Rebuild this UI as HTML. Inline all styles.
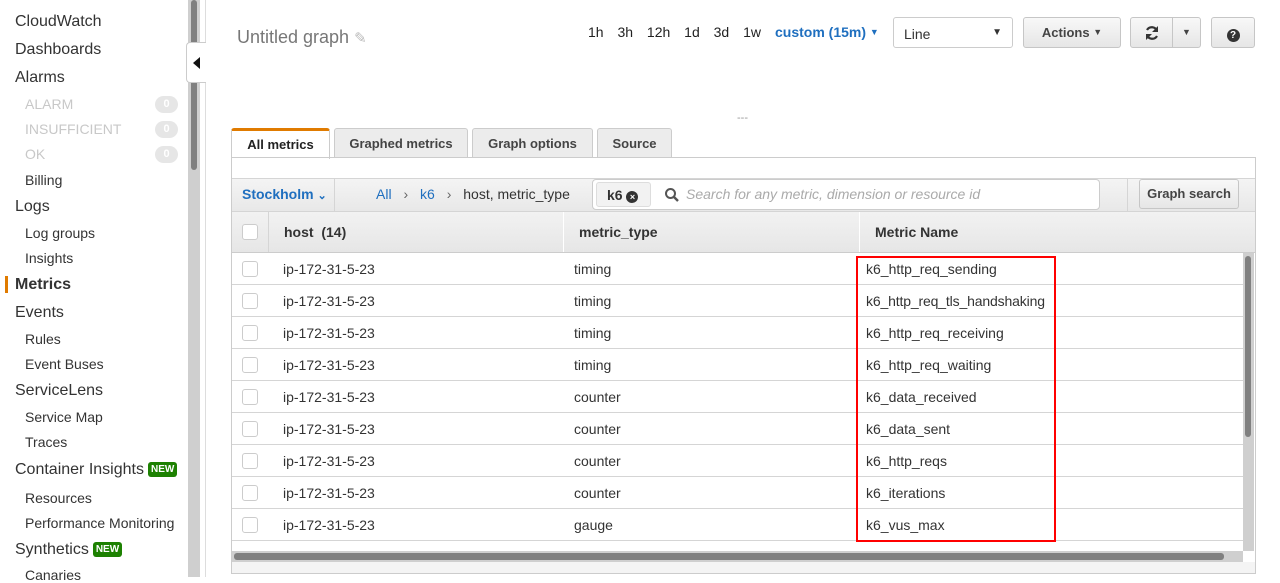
<!DOCTYPE html>
<html><head><style>
*{box-sizing:border-box;margin:0;padding:0}
body{width:1280px;height:577px;overflow:hidden;background:#fff;font-family:"Liberation Sans",Arial,sans-serif;color:#333;position:relative}
.a{position:absolute;white-space:nowrap}
.t{font-size:16px;color:#333;left:15px}
.s{font-size:14px;color:#333;left:25px}
.g{color:#c8c8c8}
.badge{position:absolute;left:155px;width:23px;height:17px;border-radius:9px;background:#e6e6e6;color:#fff;font-size:11px;font-weight:bold;text-align:center;line-height:17px}
.new{display:inline-block;background:#1d8102;color:#fff;font-size:10px;font-weight:bold;border-radius:3px;padding:2px 3px;vertical-align:2px;margin-left:4px}
.btn{position:absolute;top:17px;height:31px;border:1px solid #c6c6c6;border-radius:3px;background:linear-gradient(#f8f8f8,#e6e6e6);font-size:13px;font-weight:bold;color:#444;text-align:center;line-height:29px}
.tab{position:absolute;top:128px;height:30px;border:1px solid #ccc;border-bottom:none;background:#ececec;font-size:13px;font-weight:bold;color:#444;text-align:center;line-height:29px;border-radius:3px 3px 0 0}
.row{position:absolute;left:232px;width:1011px;height:32px;border-bottom:1px solid #d5d5d5;font-size:14px;color:#333}
.row span{position:absolute;top:8px}
.cb{position:absolute;left:10px;top:8px;width:16px;height:16px;border:1px solid #ccc;border-radius:3px;background:#fff}
</style></head><body>
<div class="a t" style="top:13px">CloudWatch</div>
<div class="a t" style="top:41px">Dashboards</div>
<div class="a t" style="top:69px">Alarms</div>
<div class="a s g" style="top:96px">ALARM</div><div class="badge" style="top:96px">0</div>
<div class="a s g" style="top:121px">INSUFFICIENT</div><div class="badge" style="top:121px">0</div>
<div class="a s g" style="top:146px">OK</div><div class="badge" style="top:146px">0</div>
<div class="a s" style="top:172px">Billing</div>
<div class="a t" style="top:198px">Logs</div>
<div class="a s" style="top:225px">Log groups</div>
<div class="a s" style="top:250px">Insights</div>
<div class="a" style="left:5px;top:276px;width:3px;height:17px;background:#e07b00"></div>
<div class="a t" style="top:276px;font-weight:bold">Metrics</div>
<div class="a t" style="top:304px">Events</div>
<div class="a s" style="top:331px">Rules</div>
<div class="a s" style="top:356px">Event Buses</div>
<div class="a t" style="top:382px">ServiceLens</div>
<div class="a s" style="top:409px">Service Map</div>
<div class="a s" style="top:434px">Traces</div>
<div class="a t" style="top:461px">Container Insights<span class="new">NEW</span></div>
<div class="a s" style="top:490px">Resources</div>
<div class="a s" style="top:515px">Performance Monitoring</div>
<div class="a t" style="top:541px">Synthetics<span class="new">NEW</span></div>
<div class="a s" style="top:567px">Canaries</div>
<div class="a" style="left:188px;top:0;width:12px;height:577px;background:#cfcfcf"></div>
<div class="a" style="left:191px;top:0;width:6px;height:170px;background:#808080;border-radius:3px"></div>
<div class="a" style="left:205px;top:0;width:1px;height:577px;background:#ddd"></div>
<div class="a" style="left:186px;top:42px;width:20px;height:41px;background:#fff;border:1px solid #ccc;border-right:none;border-radius:4px 0 0 4px"></div>
<div class="a" style="left:193px;top:57px;width:0;height:0;border-top:6px solid transparent;border-bottom:6px solid transparent;border-right:7px solid #111"></div>
<div class="a" style="left:237px;top:27px;font-size:18px;color:#777">Untitled graph <span style="color:#bbb;font-size:15px">✎</span></div>
<div class="a" style="left:588px;top:24px;font-size:14px;color:#222;word-spacing:10px">1h 3h 12h 1d 3d 1w</div>
<div class="a" style="left:775px;top:24px;font-size:14px;font-weight:bold;color:#1f6fbf">custom (15m) <span style="font-size:9px;vertical-align:2px">▼</span></div>
<div class="a" style="left:893px;top:17px;width:120px;height:31px;border:1px solid #ccc;border-radius:3px;font-size:14px;color:#333;padding:8px 10px">Line<span style="position:absolute;right:10px;top:9px;font-size:10px;color:#333">▼</span></div>
<div class="btn" style="left:1023px;width:98px">Actions <span style="font-size:9px;vertical-align:2px">▼</span></div>
<div class="btn" style="left:1130px;width:43px;border-radius:3px 0 0 3px">
<svg width="18" height="18" viewBox="0 0 18 18" style="margin-top:6px"><path d="M14 7A5.5 5.5 0 0 0 4 6M4 11a5.5 5.5 0 0 0 10 1" fill="none" stroke="#333" stroke-width="2.2"/><path d="M15 2v6h-6zM3 16v-6h6z" fill="#333"/></svg></div>
<div class="btn" style="left:1172px;width:29px;border-radius:0 3px 3px 0;font-size:9px">▼</div>
<div class="btn" style="left:1211px;width:44px"><span style="display:inline-block;width:13px;height:13px;border-radius:50%;background:#333;color:#fff;font-size:10px;line-height:13px;vertical-align:-1px">?</span></div>
<div class="a" style="left:737px;top:112px;font-size:11px;color:#999">---</div>
<div class="tab" style="left:231px;width:99px;background:#fff;border-top:3px solid #e07b00;color:#222;height:31px;line-height:27px">All metrics</div>
<div class="tab" style="left:334px;width:134px">Graphed metrics</div>
<div class="tab" style="left:472px;width:121px">Graph options</div>
<div class="tab" style="left:597px;width:75px">Source</div>
<div class="a" style="left:231px;top:157px;width:1025px;height:417px;border:1px solid #ccc"></div>
<div class="a" style="left:330px;top:157px;width:926px;height:1px;background:#ccc"></div>
<div class="a" style="left:232px;top:178px;width:1023px;height:33px;background:linear-gradient(#f4f4f4,#e8e8e8);border-top:1px solid #d5d5d5"></div>
<div class="a" style="left:242px;top:186px;font-size:14px;font-weight:bold;color:#1f6fbf">Stockholm <span style="font-size:11px">⌄</span></div>
<div class="a" style="left:334px;top:179px;width:1px;height:32px;background:#d5d5d5"></div>
<div class="a" style="left:376px;top:186px;font-size:14px;color:#1f6fbf">All <span style="color:#666;margin:0 8px">›</span> k6 <span style="color:#666;margin:0 8px">›</span> <span style="color:#333">host, metric_type</span></div>
<div class="a" style="left:592px;top:179px;width:508px;height:31px;border:1px solid #ccc;border-radius:4px;background:#fff"></div>
<div class="a" style="left:596px;top:182px;width:55px;height:25px;border:1px solid #ddd;border-radius:3px;background:#f2f2f2;font-size:14px;font-weight:bold;padding:4px 10px">k6 <span style="display:inline-block;width:12px;height:12px;border-radius:50%;background:#333;color:#fff;font-size:9px;text-align:center;line-height:12px;vertical-align:0">×</span></div>
<svg class="a" style="left:664px;top:187px" width="16" height="16"><circle cx="6.5" cy="6.5" r="4.5" fill="none" stroke="#555" stroke-width="2"/><path d="M10 10l4 4" stroke="#555" stroke-width="2.4"/></svg>
<div class="a" style="left:686px;top:186px;font-size:14px;color:#aaa;font-style:italic">Search for any metric, dimension or resource id</div>
<div class="a" style="left:1127px;top:179px;width:1px;height:32px;background:#d5d5d5"></div>
<div class="btn" style="left:1139px;top:179px;width:100px;height:30px;line-height:28px">Graph search</div>
<div class="a" style="left:232px;top:211px;width:1023px;height:42px;background:linear-gradient(#f2f2f2,#e6e6e6);border-top:1px solid #d5d5d5;border-bottom:1px solid #ccc;font-size:14px;font-weight:bold;color:#333">
<div class="cb" style="top:12px;left:10px"></div>
<div class="a" style="left:36px;top:0;width:1px;height:40px;background:#d5d5d5"></div>
<span class="a" style="left:52px;top:12px">host&nbsp; (14)</span>
<div class="a" style="left:331px;top:0;width:1px;height:40px;background:#fff"></div>
<span class="a" style="left:347px;top:12px">metric_type</span>
<div class="a" style="left:627px;top:0;width:1px;height:40px;background:#fff"></div>
<span class="a" style="left:643px;top:12px">Metric Name</span>
</div>
<div class="row" style="top:253px"><div class="cb"></div><span style="left:51px">ip-172-31-5-23</span><span style="left:342px">timing</span><span style="left:634px">k6_http_req_sending</span></div>
<div class="row" style="top:285px"><div class="cb"></div><span style="left:51px">ip-172-31-5-23</span><span style="left:342px">timing</span><span style="left:634px;letter-spacing:-0.15px">k6_http_req_tls_handshaking</span></div>
<div class="row" style="top:317px"><div class="cb"></div><span style="left:51px">ip-172-31-5-23</span><span style="left:342px">timing</span><span style="left:634px">k6_http_req_receiving</span></div>
<div class="row" style="top:349px"><div class="cb"></div><span style="left:51px">ip-172-31-5-23</span><span style="left:342px">timing</span><span style="left:634px">k6_http_req_waiting</span></div>
<div class="row" style="top:381px"><div class="cb"></div><span style="left:51px">ip-172-31-5-23</span><span style="left:342px">counter</span><span style="left:634px">k6_data_received</span></div>
<div class="row" style="top:413px"><div class="cb"></div><span style="left:51px">ip-172-31-5-23</span><span style="left:342px">counter</span><span style="left:634px">k6_data_sent</span></div>
<div class="row" style="top:445px"><div class="cb"></div><span style="left:51px">ip-172-31-5-23</span><span style="left:342px">counter</span><span style="left:634px">k6_http_reqs</span></div>
<div class="row" style="top:477px"><div class="cb"></div><span style="left:51px">ip-172-31-5-23</span><span style="left:342px">counter</span><span style="left:634px">k6_iterations</span></div>
<div class="row" style="top:509px"><div class="cb"></div><span style="left:51px">ip-172-31-5-23</span><span style="left:342px">gauge</span><span style="left:634px">k6_vus_max</span></div>
<div class="a" style="left:856px;top:256px;width:200px;height:286px;border:2px solid #f00"></div>
<div class="a" style="left:1243px;top:253px;width:11px;height:298px;background:#cfcfcf"></div>
<div class="a" style="left:1245px;top:256px;width:6px;height:181px;background:#808080;border-radius:3px"></div>
<div class="a" style="left:232px;top:551px;width:1011px;height:11px;background:#cfcfcf"></div>
<div class="a" style="left:234px;top:553px;width:990px;height:7px;background:#808080;border-radius:3px"></div>
<div class="a" style="left:232px;top:562px;width:1023px;height:11px;background:#f4f4f4"></div>
</body></html>
